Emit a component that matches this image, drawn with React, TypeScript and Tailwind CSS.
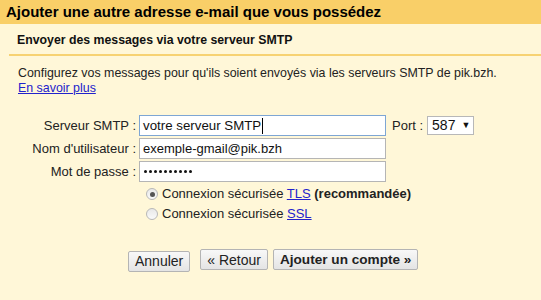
import React from 'react';

const font = { fontFamily: '"Liberation Sans", Arial, sans-serif' };

const Field = ({ label, children }: { label: string; children: React.ReactNode }) => (
  <div className="flex items-center h-[23px]">
    <div className="w-[139px] pr-[3px] text-right text-[13px] text-[#222]">{label}</div>
    {children}
  </div>
);

const Btn = ({ children, bold }: { children: React.ReactNode; bold?: boolean }) => (
  <button
    className={`h-[21px] px-[6px] border border-[#b4b4b4] rounded-[2px] bg-gradient-to-b from-[#f8f8f8] to-[#e4e4e4] text-[#222] leading-none ${bold ? 'font-bold text-[13.6px]' : 'text-[14px]'}`}
  >
    {children}
  </button>
);

const Radio = ({ checked }: { checked?: boolean }) => (
  <span className="w-[12px] h-[12px] rounded-full border border-[#b8b8b8] bg-gradient-to-b from-[#e8e8e8] to-[#fafafa] flex items-center justify-center mr-[4px]">
    {checked && <span className="w-[5px] h-[5px] rounded-full bg-[#555]" />}
  </span>
);

const App = () => {
  return (
    <div className="w-[541px] h-[300px] bg-[#fff7d8] overflow-hidden" style={font}>
      {/* title bar */}
      <div className="h-[24px] bg-[#f9cf68] pl-[6px] flex items-center">
        <h1 className="text-[15px] font-bold text-black">Ajouter une autre adresse e-mail que vous possédez</h1>
      </div>

      <div className="pl-[9px]">
        <div className="h-[32px] border-b-2 border-[#f7d272] pl-[8px] flex items-center pt-[3px]">
          <h2 className="text-[12.3px] font-bold text-[#111]">Envoyer des messages via votre serveur SMTP</h2>
        </div>

        <div className="pl-[9px] pt-[10px] text-[12.4px] text-[#222] leading-[15px]">
          <p>Configurez vos messages pour qu'ils soient envoyés via les serveurs SMTP de pik.bzh.</p>
          <a href="#" className="text-[#2222cc] underline">En savoir plus</a>
        </div>
      </div>

      <div className="mt-[18px]">
        <Field label="Serveur SMTP :">
          <div className="w-[247px] h-[21px] border border-[#7ea6d4] bg-white flex items-center px-[3px] text-[13.3px] text-[#111]">
            votre serveur SMTP<span className="w-px h-[16px] bg-black ml-px" />
          </div>
          <span className="ml-[6px] text-[13px] text-[#222]">Port :</span>
          <div className="ml-[4px] w-[47px] h-[19px] border border-[#b8b8b8] bg-white flex items-center pl-[4px] text-[14px] text-[#111]">
            587<span className="ml-[6px] text-[9px]">▼</span>
          </div>
        </Field>
        <Field label="Nom d'utilisateur :">
          <div className="w-[247px] h-[21px] border border-[#b5b5b5] bg-white flex items-center px-[3px] text-[13px] text-[#111]">
            exemple-gmail@pik.bzh
          </div>
        </Field>
        <Field label="Mot de passe :">
          <div className="w-[247px] h-[21px] border border-[#b5b5b5] bg-white flex items-center gap-[2px] pl-[4px]">
            {Array.from({ length: 10 }).map((_, i) => (
              <span key={i} className="w-[3px] h-[3px] rounded-full bg-[#111]" />
            ))}
          </div>
        </Field>

        <div className="ml-[146px] mt-[1px] text-[13px] text-[#222] leading-[20px]">
          <div className="flex items-center">
            <Radio checked />
            <span>
              Connexion sécurisée <a href="#" className="text-[#2222cc] underline">TLS</a> <b>(recommandée)</b>
            </span>
          </div>
          <div className="flex items-center">
            <Radio />
            <span>
              Connexion sécurisée <a href="#" className="text-[#2222cc] underline">SSL</a>
            </span>
          </div>
        </div>

        <div className="ml-[128px] mt-[25px] flex gap-[5px]">
          <div className="mr-[5px]"><Btn>Annuler</Btn></div>
          <Btn>« Retour</Btn>
          <Btn bold>Ajouter un compte »</Btn>
        </div>
      </div>
    </div>
  );
};

export default App;
